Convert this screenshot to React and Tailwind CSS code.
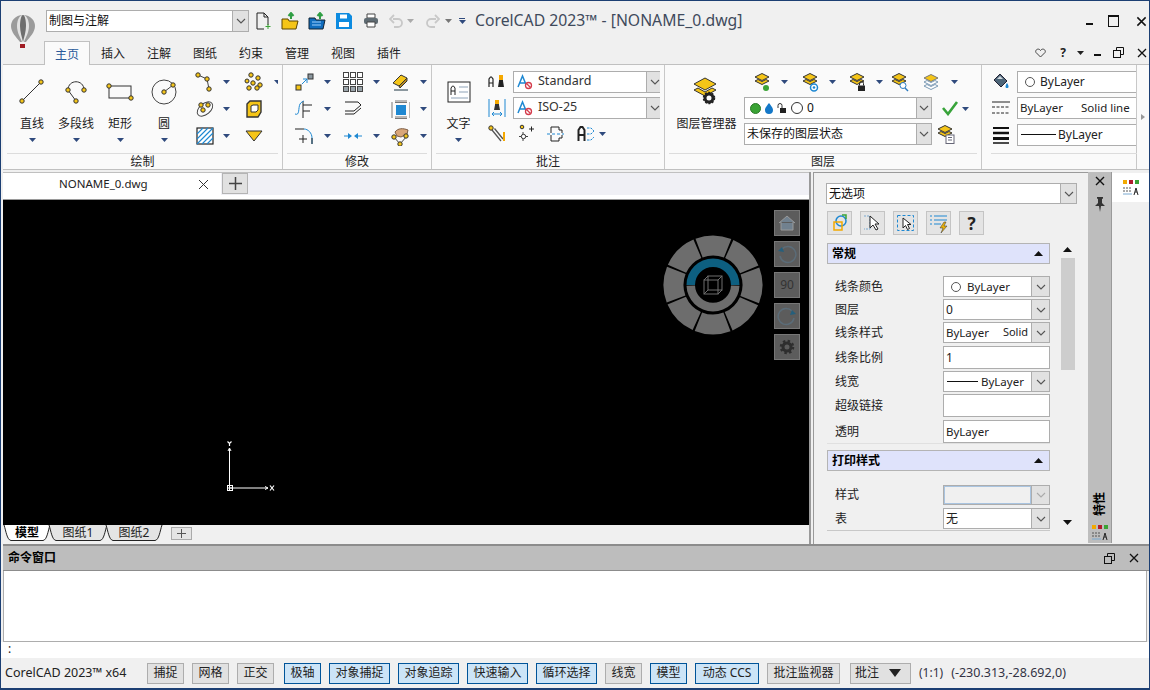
import React from 'react';

// small shared bits
const N = ({x, y, r = 2.2}) => <circle cx={x} cy={y} r={r} fill="#f5c518" stroke="#333" strokeWidth="1" />
const Ic = ({s = 20, children, vb}) => (
  <svg width={s} height={s} viewBox={vb || `0 0 ${s} ${s}`} fill="none" className="shrink-0">{children}</svg>
)
const Arrow = ({c = '#2f4a7d'}) => (
  <svg width="7" height="4" viewBox="0 0 7 4" className="shrink-0"><path d="M0 0h7L3.5 4z" fill={c} /></svg>
)
const Chev = ({c = '#555'}) => (
  <svg width="10" height="6" viewBox="0 0 10 6" fill="none"><path d="M1 1l4 4 4-4" stroke={c} strokeWidth="1.1" /></svg>
)
const StyleA = () => (
  <svg width="18" height="16" viewBox="0 0 18 16" fill="none" className="shrink-0 ml-[3px] mr-[3px]">
    <path d="M1 13L5.500 2 10 13M2.800 9h5.400" stroke="#1e88d2" strokeWidth="1.500" />
    <circle cx="11.500" cy="11.500" r="3" fill="#fff" stroke="#d43c4c" strokeWidth="1.300" />
    <path d="M9.500 9.500l4 4" stroke="#d43c4c" strokeWidth="1.200" />
  </svg>
)
const Combo = ({className, children, arrow = 18, off}) => (
  <div className={`flex border border-[#adadad] shrink-0 ${off ? 'bg-[#f0f0f0]' : 'bg-white'} ${className}`}>
    <div className="flex-1 min-w-0 flex items-center overflow-hidden whitespace-nowrap">{children}</div>
    {arrow > 0 && (
      <div style={{width: arrow}} className="flex items-center justify-center bg-[#e1e1e1] border-l border-[#adadad] shrink-0">
        <Chev c={off ? '#aaa' : '#555'} />
      </div>
    )}
  </div>
)

// ribbon tools
const BigTool = ({label, w = 44, icon, arrow = true}) => (
  <div style={{width: w}} className="flex flex-col items-center pt-[10px] shrink-0">
    <div className="h-8 flex items-center justify-center">{icon}</div>
    <div className="h-[18px] mt-[7px] leading-[18px] whitespace-nowrap">{label}</div>
    {arrow && <div className="mt-[5px] leading-none flex"><Arrow /></div>}
  </div>
)
const Tool = ({icon, arrow = true, gap = 8}) => (
  <div className="h-[27px] flex items-center shrink-0">
    <div className="w-5 h-5 flex items-center justify-center">{icon}</div>
    {arrow && <div style={{marginLeft: gap}} className="flex"><Arrow /></div>}
  </div>
)
const Group = ({label, w, children}) => (
  <div style={{width: w}} className="flex flex-col shrink-0 h-full border-r border-[#c8c8c8] px-[4px]">
    <div className="h-[88px] pt-[1px] flex overflow-hidden">{children}</div>
    <div className="border-t border-[#dcdcdc] h-[16px] leading-[16px] text-center">{label}</div>
  </div>
)

// icons, drawn after the screenshot
const bigIcons = {
  line: <Ic s={32}><path d="M6 25L25 6" stroke="#333" /><N x={6} y={25} /><N x={25} y={6} /></Ic>,
  poly: <Ic s={32}><path d="M8 14C8 3 24 3 24 14M8 14l8 11" stroke="#333" /><N x={8} y={14} /><N x={24} y={14} /><N x={16} y={25} /></Ic>,
  rect: <Ic s={32}><rect x="5" y="10" width="22" height="12" stroke="#333" /><N x={5} y={10} /><N x={27} y={22} /></Ic>,
  circle: <Ic s={32}><circle cx="16" cy="16" r="12" stroke="#444" /><path d="M16 16l9-7" stroke="#444" /><N x={16} y={16} /><N x={25} y={9} /></Ic>,
  text: (
    <svg width="24" height="22" viewBox="0 0 24 22" fill="none">
      <rect x="1" y="1" width="22" height="20" fill="#fff" stroke="#222" />
      <path d="M4 14V7l1.500-2h1L8 7v7M4 10h4" stroke="#222" />
      <path d="M12 6h9M12 11h9M4 17h17" stroke="#8fa3b8" />
    </svg>
  ),
  layers: (
    <svg width="32" height="34" viewBox="0 0 32 34">
      <path d="M3 9l11-6 11 6-11 6z" fill="#f5c518" stroke="#333" />
      <path d="M3 15l4-2 7 4 7-4 4 2-11 6z" fill="#f5c518" stroke="#333" />
      <g transform="translate(11 16)"><circle cx="7" cy="7" r="4" fill="none" stroke="#222" strokeWidth="3" /><circle cx="7" cy="7" r="5.500" fill="none" stroke="#222" strokeWidth="1.500" strokeDasharray="2 1.500" /></g>
    </svg>
  ),
}
const LayerStack = ({children}) => (
  <Ic s={20}>
    <path d="M2 5l7-3.500L16 5 9 8.500z" fill="#f5c518" stroke="#333" />
    <path d="M2 9l3-1.500 4 2 4-2L16 9l-7 3.500z" fill="#f5c518" stroke="#333" />
    {children}
  </Ic>
)
const draw = {
  poly2: <Ic><path d="M3 3l9 4 2 10" stroke="#444" /><N x={3} y={3} /><N x={12} y={7} /><N x={14} y={17} /></Ic>,
  dots: <Ic><N x={7} y={3} /><N x={14} y={6} /><N x={3} y={9} r={2} /><N x={9} y={11} /><N x={16} y={13} /><N x={5} y={16} /><N x={13} y={16} /></Ic>,
  ellipse: <Ic><ellipse cx="10" cy="10" rx="9" ry="5.500" transform="rotate(-40 10 10)" stroke="#444" /><N x={8} y={11} /><N x={13} y={6} /><N x={6} y={6} /></Ic>,
  region: <Ic><path d="M3 5l3-3h11v11l-3 5H3z" fill="#f5c518" stroke="#333" strokeWidth="1.400" /><path d="M7 7l2-1h5v5l-2 2H7z" fill="#fff" stroke="#333" /></Ic>,
  hatch: <Ic><rect x="2" y="2" width="16" height="16" fill="#fff" stroke="#222" strokeWidth="1.200" /><path d="M2 8l6-6M2 13l11-11M2 18L18 2M7 18L18 7M12 18l6-6" stroke="#1e88d2" strokeWidth="1.100" /></Ic>,
  wipe: <Ic><path d="M2 5h16l-8 10z" fill="#f5c518" stroke="#333" /></Ic>,
  move: <Ic><rect x="2" y="13" width="5" height="5" fill="#f5c518" stroke="#333" /><rect x="14" y="2" width="5" height="5" fill="#8b979e" stroke="#333" /><path d="M8 12l5-5M13 7H9M13 7v4" stroke="#1e88d2" /></Ic>,
  array: <Ic>{[3, 10, 17].map(y => [3, 10, 17].map(x => <rect key={x + '-' + y} x={x - 2.500} y={y - 2.500} width="5" height="5" fill={y === 17 ? '#9aa4aa' : '#fff'} stroke="#444" />))}</Ic>,
  erase: <Ic><path d="M3 11l8-8 6 3-8 8z" fill="#f5c518" stroke="#333" /><path d="M9 14l8-8v3l-7 7z" fill="#b98a1e" stroke="#333" /><path d="M4 18h14" stroke="#8b979e" strokeWidth="2" /></Ic>,
  trim: <Ic><path d="M9 2v17M9 6h9M9 12h7" stroke="#222" /><path d="M1 15c5 2 3-6 5-10 1-2 4-3 4-3" stroke="#1e88d2" /></Ic>,
  chamfer: <Ic><path d="M2 3h13l3 3-7 6H2M2 15h9l7-6" stroke="#222" /></Ic>,
  offset: <Ic><rect x="6" y="6" width="10" height="10" fill="#1e88d2" /><path d="M2 3v16M20 3v16M5 2h12M5 3.500h12M5 18h12M5 19.500h12" stroke="#777" /></Ic>,
  fillet: <Ic><path d="M10 3c4 0 8 4 8 9v6" stroke="#1e88d2" /><path d="M1 3h9M18 12v6" stroke="#222" /><path d="M5 13h8M9 9v8" stroke="#222" /></Ic>,
  join: <Ic><path d="M1 10h6M19 10h-6" stroke="#1e88d2" /><path d="M9 10L5 7v6zM11 10l4-3v6z" fill="#1e88d2" /></Ic>,
  grip: <Ic><path d="M5 6c3-4 8-4 13-2l-1 4-6 3-4-1z" fill="#d9a679" stroke="#7a5a40" /><path d="M4 11l6 7M10 18l7-8" stroke="#444" /><N x={4} y={11} /><N x={10} y={18} /><N x={16} y={10} /></Ic>,
  textStyle: <Ic><path d="M2 15V7l1.500-2h1L6 7v8M2 11h4" stroke="#222" strokeWidth="1.200" /><path d="M12 3h4v6l1 6h-6l1-6z" fill="#222" /><path d="M12 3h4v5h-4z" fill="#f5a800" /></Ic>,
  dimStyle: <Ic><path d="M2 1v18M18 1v18" stroke="#1e88d2" /><path d="M5 16h10M5 16l2-2M5 16l2 2M15 16l-2-2M15 16l-2 2" stroke="#1e88d2" /><path d="M8 2h4v5l1 5H7l1-5z" fill="#333" /><path d="M8 2h4v4H8z" fill="#f5a800" /></Ic>,
  leader: <Ic><path d="M5 6l9 11M7.500 4.500L16 15" stroke="#555" strokeWidth="1.300" /><path d="M17 8v9" stroke="#f5a800" strokeWidth="2" /><N x={4} y={4} /></Ic>,
  center: <Ic><path d="M8 8v9M4 12.500h9" stroke="#444" /><path d="M14 5h5M16.500 2.500v5" stroke="#222" /><N x={7} y={3} r={1.800} /><circle cx="8.500" cy="12.500" r="2.200" fill="#fff" stroke="#333" /></Ic>,
  wipeBox: <Ic><path d="M6 9V3h8v3h3v3M6 11v6h8v-3h3v-3" stroke="#222" /><path d="M2 10h17" stroke="#1e88d2" strokeDasharray="3 2" /></Ic>,
  replace: <Ic><path d="M2.500 17V6l2-3h2l2 3v11M2.500 11h6" stroke="#222" strokeWidth="2" /><path d="M11 4h4l3 3-3 3h-4M11 16h4l3-3" stroke="#1e88d2" strokeDasharray="2.500 1" /></Ic>,
  l1: <LayerStack><circle cx="13" cy="16" r="3" fill="#3aa335" /></LayerStack>,
  l2: <LayerStack><circle cx="13" cy="15.500" r="3.500" fill="#fff" stroke="#1e88d2" strokeWidth="1.500" /><circle cx="13" cy="15.500" r="1.300" fill="#1e88d2" /></LayerStack>,
  l3: <LayerStack><rect x="10" y="13.500" width="7" height="5.500" fill="#222" /><path d="M11.500 13.500v-2a2 2 0 014 0v2" stroke="#222" /></LayerStack>,
  l4: <LayerStack><circle cx="13" cy="13.500" r="3" fill="#fff" stroke="#2a7ac0" /><path d="M15 16l3 3" stroke="#2a7ac0" strokeWidth="1.400" /></LayerStack>,
  l5: <Ic><path d="M3 6l7-3.500L17 6l-7 3.500z" fill="#f5c518" stroke="#777" /><path d="M3 10l3-1.500 4 2 4-2 3 1.500-7 3.500z" fill="#fff" stroke="#7b9ab5" /><path d="M3 14l3-1.500 4 2 4-2 3 1.500-7 3.500z" fill="#fff" stroke="#7b9ab5" /></Ic>,
  lState: <LayerStack><rect x="10" y="11" width="8" height="8.500" fill="#fff" stroke="#667" /><path d="M12 13.500h4M12 16h4" stroke="#667" /></LayerStack>,
  check: <svg width="18" height="16" viewBox="0 0 18 16" fill="none"><path d="M2 8l5 6L16 2" stroke="#38a33a" strokeWidth="2.600" /></svg>,
  bucket: <Ic><path d="M3 8l6-6 7 7-6 6z" fill="#4d6578" stroke="#223" /><path d="M6 7l3-3 3 3" fill="#cfd8dd" /><path d="M16 11c2 3 2 5 0 5s-2-2 0-5z" fill="#1e88d2" /></Ic>,
  ltype: <Ic><path d="M1 4h18" stroke="#222" /><path d="M1 9h18M1 15h18" stroke="#222" strokeDasharray="3 1.500" /></Ic>,
  lweight: <Ic><path d="M2 3h16" stroke="#111" strokeWidth="2" /><path d="M2 8h16" stroke="#111" strokeWidth="2.500" /><path d="M2 13.500h16" stroke="#111" strokeWidth="3" /><path d="M2 18h16" stroke="#111" strokeWidth="1.500" /></Ic>,
}

const qat = [
  <svg key="n" width="18" height="18" viewBox="0 0 18 18" fill="none"><path d="M3 1h7l4 4v8M3 1v16h7M10 1v4h4" stroke="#222" /><path d="M14 12v5M11.500 14.500h5" stroke="#3aa335" /></svg>,
  <svg key="o" width="18" height="18" viewBox="0 0 18 18"><path d="M1 7h6l1 2h9l-2 8H1z" fill="#f5c518" stroke="#5a4500" /><path d="M10 7V2M7.500 4L10 1l2.500 3" fill="none" stroke="#2f9e44" strokeWidth="2" /></svg>,
  <svg key="o2" width="18" height="18" viewBox="0 0 18 18"><path d="M1 6h6l1 2h9l-2 9H1z" fill="#0f6cbd" stroke="#123" /><path d="M4 10h9M4 13h9" stroke="#9fd0ff" /><path d="M12 7V2M9.500 4L12 1l2.500 3" fill="none" stroke="#2f9e44" strokeWidth="2" /></svg>,
  <svg key="s" width="16" height="16" viewBox="0 0 16 16"><path d="M0 0h13l3 3v13H0z" fill="#0d8be0" /><rect x="4" y="1.500" width="7" height="4" fill="#fff" /><rect x="3" y="9" width="10" height="5" fill="#fff" /></svg>,
  <svg key="p" width="16" height="16" viewBox="0 0 16 16"><path d="M4 1h8v4H4z" fill="#fff" stroke="#444" /><rect x="1" y="5" width="14" height="6" rx="2" fill="#5f6b72" /><path d="M4 9h8v5H4z" fill="#fff" stroke="#444" /></svg>,
]

const Tab = ({label, active}) => active ? (
  <div className="w-[46px] h-[24px] bg-[#fafafa] border border-[#c0c0c0] border-b-0 text-center text-[#2a5a9a] leading-[25px] -mb-px z-10 shrink-0">{label}</div>
) : (
  <div className="w-[46px] h-[23px] text-center leading-[26px] shrink-0">{label}</div>
)

const SheetTab = ({label, active, w}) => (
  <div style={{width: w}} className="relative h-[17px] -mr-[3px] shrink-0 flex justify-center">
    <svg className="absolute inset-0" width={w} height="17" viewBox={`0 0 ${w} 17`} preserveAspectRatio="none">
      <path d={`M1 0c2 6 3 15 7 15.500h${w - 16}c4 -.5 5 -9.500 7 -15.500`} fill={active ? '#fff' : '#e4e4e4'} stroke="#222" />
    </svg>
    <span className={`relative leading-[16px] ${active ? 'font-bold text-black' : ''}`}>{label}</span>
  </div>
)

const Prop = ({label, h, mb = 2, children}) => (
  <div style={{height: h, marginBottom: mb}} className="flex items-center shrink-0">
    <div className="w-[116px] pl-[8px]">{label}</div>
    {children}
  </div>
)
const SectionHead = ({label}) => (
  <div className="h-[21px] bg-[#dfe3fb] border border-[#b4b4b4] flex items-center justify-between pl-[4px] pr-[6px] font-bold text-black shrink-0">
    {label}
    <svg width="9" height="5" viewBox="0 0 9 5"><path d="M4.500 0L9 5H0z" fill="#111" /></svg>
  </div>
)
const PanelBtn = ({children}) => (
  <div className="w-[25px] h-[24px] bg-[#e4e4e4] border border-[#c4c4c4] flex items-center justify-center shrink-0">{children}</div>
)
const CubeBtn = ({children}) => (
  <div className="w-[26px] h-[26px] bg-[#5c5c5c] border border-[#777] flex items-center justify-center text-[#222] text-[12px]">{children}</div>
)

const seg = (r1, r2, a1, a2) => {
  const p = (r, a) => `${(50 + r * Math.sin(a * Math.PI / 180)).toFixed(2)} ${(50 - r * Math.cos(a * Math.PI / 180)).toFixed(2)}`
  return `M${p(r1, a1)}A${r1} ${r1} 0 0 1 ${p(r1, a2)}L${p(r2, a2)}A${r2} ${r2} 0 0 0 ${p(r2, a1)}Z`
}
const ViewCube = () => (
  <svg width="100" height="100" viewBox="0 0 100 100">
    {[-22, 23, 68, 113, 158, 203, 248, 293].map(a => <path key={a} d={seg(49.500, 29.500, a + 1.300, a + 43.700)} fill="#6d6d6d" />)}
    <path d={seg(26.500, 18, -90, 90)} fill="#0d5f80" />
    <path d={seg(26.500, 18, 91.500, 268.500)} fill="#6d6d6d" />
    <g stroke="#6f6f6f" fill="none">
      <rect x="41" y="45" width="14" height="14" />
      <rect x="45" y="41" width="14" height="14" />
      <path d="M41 45l4-4M55 45l4-4M55 59l4-4M41 59l4-4" />
    </g>
  </svg>
)
const StatusBtn = ({w, on, ml = 0, children}) => (
  <div style={{width: w, marginLeft: ml}} className={`h-[21px] shrink-0 flex items-center justify-center border whitespace-nowrap ${on ? 'bg-[#cce4f7] border-[#005499]' : 'bg-[#e1e1e1] border-[#adadad]'}`}>{children}</div>
)

export default function App() {
  return (
    <div className="w-[1150px] h-[690px] overflow-hidden flex flex-col bg-[#f0f0f0] border-t border-b-2 border-x border-t-[#1c3f73] border-b-[#1c3f73] border-x-[#1c3f73] text-[12px] text-[#222] font-['Noto_Sans','Noto_Sans_CJK_SC',sans-serif]">
      {/* title + tabs */}
      <div className="flex h-[63px] shrink-0">
        <div className="w-[43px] flex justify-center pt-[13px] pl-[1px] shrink-0">
          <svg width="26" height="35" viewBox="0 0 26 35">
            <path d="M13 1C5 1 1 7 1 12c0 6 5 11 9 16h6c4-5 9-10 9-16 0-5-4-11-12-11z" fill="#9b9b9b" />
            <path d="M13 1C9 1 7 7 7 12c0 6 3 11 5 16h2c2-5 5-10 5-16 0-5-2-11-6-11z" fill="#e2e2e2" />
            <path d="M13 1c-2 0-3 6-3 11 0 6 2 11 3 16 1-5 3-10 3-16 0-5-1-11-3-11z" fill="#6e6e6e" />
            <rect x="10" y="30" width="5" height="4" fill="#a01c24" />
          </svg>
        </div>
        <div className="flex-1 min-w-0 flex flex-col">
          <div className="h-[40px] flex items-center shrink-0 relative">
            <Combo className="w-[203px] h-[22px] ml-[2px] border-[#a5a5a5]" arrow={16}>
              <span className="pl-[2px] text-[#111]">制图与注解</span>
            </Combo>
            <div className="flex items-center">
              {qat.map((q, i) => <div key={i} className="w-[27px] flex justify-center">{q}</div>)}
              <div className="w-[23px] flex justify-center text-[#ccc]">
                <svg width="14" height="14" viewBox="0 0 14 14" fill="none"><path d="M4 5h5a4 4 0 010 8H5M5 1L1 5l4 4" stroke="#c8c8c8" strokeWidth="1.800" /></svg>
              </div>
              <div className="w-[14px] flex"><Arrow c="#aaa" /></div>
              <div className="w-[24px] flex justify-center">
                <svg width="14" height="14" viewBox="0 0 14 14" fill="none"><path d="M10 5H5a4 4 0 000 8h4M9 1l4 4-4 4" stroke="#c8c8c8" strokeWidth="1.800" /></svg>
              </div>
              <div className="w-[14px] flex"><Arrow c="#777" /></div>
              <div className="w-[16px] flex flex-col gap-[1px]"><div className="w-[6px] h-px bg-[#2f4a7d]" /><Arrow /></div>
            </div>
            <div className="text-[15.75px] text-[#3f4a5c] whitespace-nowrap">CorelCAD 2023™ - [NONAME_0.dwg]</div>
            <div className="ml-auto flex items-center pr-[2px] gap-[14px]">
              <div className="w-[10px] flex justify-center"><div className="w-[7px] h-[2px] bg-[#111] mt-[5px]" /></div>
              <div className="w-[11px] h-[12px] border border-[#111] border-t-2" />
              <svg className="ml-[3px]" width="11" height="11" viewBox="0 0 12 12"><path d="M1.500 1.500l9 9M10.500 1.500l-9 9" stroke="#111" strokeWidth="1.600" /></svg>
            </div>
          </div>
          <div className="h-[23px] flex items-end shrink-0">
            <Tab label="主页" active />
            {['插入', '注解', '图纸', '约束', '管理', '视图', '插件'].map(t => <Tab key={t} label={t} />)}
            <div className="ml-auto h-[23px] flex items-center pr-[2px] text-[#222]">
              <svg width="11" height="10" viewBox="0 0 11 10" fill="none"><path d="M5.500 9L1 4.500C-.5 2 3.500-.5 5.500 2.500 7.500-.5 11.500 2 10 4.500z" stroke="#444" /></svg>
              <span className="ml-[14px] font-bold leading-none">?</span>
              <div className="ml-[11px] flex"><Arrow c="#222" /></div>
              <div className="ml-[10px] w-[7px] h-[2px] bg-[#111] mt-[5px]" />
              <svg className="ml-[12px]" width="11" height="11" viewBox="0 0 11 11" fill="none"><rect x=".5" y="3.500" width="7" height="7" stroke="#111" /><path d="M3.500 3V.5h7v7H8" stroke="#111" /></svg>
              <svg className="ml-[13px]" width="10" height="10" viewBox="0 0 10 10"><path d="M1 1l8 8M9 1L1 9" stroke="#111" strokeWidth="1.300" /></svg>
            </div>
          </div>
        </div>
      </div>

      {/* ribbon */}
      <div className="h-[106px] ml-[2px] flex shrink-0 bg-[#fafafa] border-t border-b border-[#c0c0c0]">
        <Group label="绘制" w={280}>
          <div className="flex">
            <div className="w-[3px] shrink-0" />
            <BigTool label="直线" icon={bigIcons.line} />
            <BigTool label="多段线" icon={bigIcons.poly} />
            <BigTool label="矩形" icon={bigIcons.rect} />
            <BigTool label="圆" icon={bigIcons.circle} />
          </div>
          <div className="grid grid-cols-[49px_46px] auto-rows-[27px] ml-[9px] pt-[2px] h-fit">
            <Tool icon={draw.poly2} /><Tool icon={draw.dots} gap={10} />
            <Tool icon={draw.ellipse} /><Tool icon={draw.region} arrow={false} />
            <Tool icon={draw.hatch} /><Tool icon={draw.wipe} arrow={false} />
          </div>
        </Group>
        <Group label="修改" w={149}>
          <div className="grid grid-cols-[49px_47px_46px] auto-rows-[27px] ml-[7px] pt-[2px] h-fit">
            <Tool icon={draw.move} gap={10} /><Tool icon={draw.array} gap={10} /><Tool icon={draw.erase} gap={10} />
            <Tool icon={draw.trim} gap={10} /><Tool icon={draw.chamfer} arrow={false} /><Tool icon={draw.offset} gap={10} />
            <Tool icon={draw.fillet} gap={10} /><Tool icon={draw.join} gap={10} /><Tool icon={draw.grip} gap={10} />
          </div>
        </Group>
        <Group label="批注" w={233}>
          <BigTool label="文字" w={45} icon={bigIcons.text} />
          <div className="flex flex-col pt-[2px] ml-[6px]">
            <div className="h-[27px] flex items-center">
              <div className="w-5 flex justify-center">{draw.textStyle}</div>
              <Combo className="w-[150px] h-[22px] ml-[6px]" arrow={16}>
                <StyleA /><span className="text-[#333] text-[12.5px]">Standard</span>
              </Combo>
            </div>
            <div className="h-[25px] flex items-center">
              <div className="w-5 flex justify-center">{draw.dimStyle}</div>
              <Combo className="w-[150px] h-[22px] ml-[6px]" arrow={16}>
                <StyleA /><span className="text-[#333] text-[12.5px]">ISO-25</span>
              </Combo>
            </div>
            <div className="h-[28px] flex items-center">
              <div className="w-[28px]">{draw.leader}</div>
              <div className="w-[30px]">{draw.center}</div>
              <div className="w-[31px]">{draw.wipeBox}</div>
              {draw.replace}
              <div className="ml-[3px] flex"><Arrow /></div>
            </div>
          </div>
        </Group>
        <Group label="图层" w={317}>
          <BigTool label="图层管理器" w={75} icon={bigIcons.layers} arrow={false} />
          <div className="flex flex-col pt-[2px]">
            <div className="h-[27px] flex items-center pl-[9px]">
              <div className="w-[48px]"><Tool icon={draw.l1} /></div>
              <div className="w-[47px]"><Tool icon={draw.l2} /></div>
              <div className="w-[42px]"><Tool icon={draw.l3} /></div>
              <div className="w-[31px]">{draw.l4}</div>
              {draw.l5}<div className="ml-[10px] flex"><Arrow /></div>
            </div>
            <div className="h-[26px] flex items-center">
              <Combo className="w-[188px] h-[22px]" arrow={15}>
                <div className="flex items-center pl-[5px] gap-[4px]">
                  <span className="w-[11px] h-[11px] rounded-full bg-[#3aa335] border border-[#2b7a28]" />
                  <svg width="8" height="11" viewBox="0 0 8 11"><path d="M4 0c3 4 4 5 4 7a4 4 0 01-8 0c0-2 1-3 4-7z" fill="#1478c8" /></svg>
                  <svg width="10" height="11" viewBox="0 0 10 11" fill="none"><rect x="3" y="5" width="6" height="5" fill="#222" /><path d="M1 5V2.500a2 2 0 014 0V5" stroke="#333" /></svg>
                  <span className="w-[12px] h-[12px] rounded-full border border-[#333] bg-white" />
                  <span className="text-[#111]">0</span>
                </div>
              </Combo>
              <div className="ml-[9px]">{draw.check}</div>
              <div className="ml-[3px] mt-[1px] flex"><Arrow /></div>
            </div>
            <div className="h-[25px] flex items-center">
              <Combo className="w-[188px] h-[22px]" arrow={15}><span className="pl-[2px] text-[#111]">未保存的图层状态</span></Combo>
              <div className="ml-[4px]">{draw.lState}</div>
            </div>
          </div>
        </Group>
        <div className="w-[155px] shrink-0 flex flex-col h-full pl-[9px] border-r border-[#c8c8c8]">
          <div className="h-[88px] pt-[3px] flex flex-col">
            <div className="h-[27px] flex items-center"><div className="w-5">{draw.bucket}</div>
              <div className="h-[22px] w-[122px] ml-[6px] bg-white border border-[#adadad] border-r-0 flex items-center pl-[7px]"><span className="w-[10px] h-[10px] rounded-full border border-[#555] mr-[5px]" />ByLayer</div></div>
            <div className="h-[26px] flex items-center"><div className="w-5">{draw.ltype}</div>
              <div className="h-[22px] w-[122px] ml-[6px] bg-white border border-[#adadad] border-r-0 flex items-center pl-[2px] overflow-hidden whitespace-nowrap text-[11.5px]">ByLayer<span className="ml-[18px]">Solid line</span></div></div>
            <div className="h-[27px] flex items-center"><div className="w-5">{draw.lweight}</div>
              <div className="h-[22px] w-[122px] ml-[6px] bg-white border border-[#adadad] border-r-0 flex items-center pl-[3px]"><span className="w-[35px] h-px bg-[#111] mr-[2px]" />ByLayer</div></div>
          </div>
          <div className="border-t border-[#dcdcdc] mr-[-1px]" />
        </div>
        <div className="flex-1 flex items-center justify-center"><svg width="4" height="6" viewBox="0 0 4 6"><path d="M0 0l4 3-4 3z" fill="#999" /></svg></div>
      </div>

      {/* document + properties */}
      <div className="flex h-[374px] shrink-0 pt-[2px]">
        <div className="w-[808px] ml-[2px] flex flex-col shrink-0 border-r-2 border-[#9a9a9a]">
          <div className="h-[23px] flex bg-[#f0f0f5] border-t border-[#c0c0c0] shrink-0">
            <div className="w-[218px] bg-white flex items-center shrink-0 relative pl-[56px] text-[11.5px] text-[#222]">
              NONAME_0.dwg
              <svg className="ml-auto mr-[12px]" width="11" height="11" viewBox="0 0 11 11"><path d="M1 1l9 9M10 1l-9 9" stroke="#333" /></svg>
            </div>
            <div className="w-[26px] h-[21px] bg-[#e1e1e1] border border-[#b4b4b4] flex items-center justify-center shrink-0 ml-[1px]">
              <svg width="13" height="13" viewBox="0 0 13 13"><path d="M6.500 0v13M0 6.500h13" stroke="#444" strokeWidth="1.500" /></svg>
            </div>
          </div>
          <div className="h-[5px] bg-white border-b border-[#9a9a9a] shrink-0" />
          <div className="h-[325px] bg-black relative shrink-0">
            {/* view cube and ucs sit over the drawing */}
            <div className="absolute left-[660px] top-[35px]"><ViewCube /></div>
            <div className="absolute left-[771px] top-[10px] flex flex-col gap-[5px]">
              <CubeBtn><svg width="18" height="16" viewBox="0 0 18 16" fill="none"><path d="M1 8l8-7 8 7M3 7v8h12V7" fill="#71818f" stroke="#999" /></svg></CubeBtn>
              <CubeBtn><svg width="20" height="20" viewBox="0 0 20 20" fill="none"><path d="M5 5a8 8 0 11-2 7" stroke="#5b6c78" strokeWidth="1.500" /><path d="M1 7l4-4 2 5z" fill="#255f7c" /></svg></CubeBtn>
              <CubeBtn><span className="text-[#333] text-[12px]">90</span></CubeBtn>
              <CubeBtn><svg width="20" height="20" viewBox="0 0 20 20" fill="none"><path d="M15 5a8 8 0 10 2 7" stroke="#5b6c78" strokeWidth="1.500" /><path d="M19 8l-4-4-2 5z" fill="#255f7c" /></svg></CubeBtn>
              <CubeBtn><svg width="16" height="16" viewBox="0 0 16 16" fill="none"><circle cx="8" cy="8" r="4" stroke="#2e2e2e" strokeWidth="3" /><circle cx="8" cy="8" r="6" stroke="#2e2e2e" strokeWidth="2.500" strokeDasharray="2.400 2.300" /></svg></CubeBtn>
            </div>
            <svg className="absolute left-[221px] top-[240px]" width="52" height="52" viewBox="0 0 52 52" fill="none">
              <path d="M5.500 48V9M5.500 48H44" stroke="#fff" />
              <rect x="3.500" y="45.500" width="5" height="5" stroke="#fff" />
              <path d="M5.500 46v4M3.500 48h5M4 11l1.500-3L7 11M41 46.500l3 1.500-3 1.500" stroke="#fff" />
              <path d="M3.500 1.500l2 2 2-2M5.500 3.500V6M46 45.500l4 5M50 45.500l-4 5" stroke="#fff" strokeWidth="1.200" />
            </svg>
          </div>
          <div className="h-[18px] flex items-start shrink-0 bg-[#f0f0f0]">
            <SheetTab label="模型" active w={48} />
            <SheetTab label="图纸1" w={60} />
            <SheetTab label="图纸2" w={58} />
            <div className="w-[21px] h-[13px] bg-[#e4e4e4] border border-[#aaa] ml-[11px] mt-[2px] flex items-center justify-center shrink-0">
              <svg width="9" height="9" viewBox="0 0 9 9"><path d="M4.500 0v9M0 4.500h9" stroke="#555" /></svg>
            </div>
          </div>
        </div>

        <div className="w-[275px] ml-[2px] border-l border-t border-[#9a9a9a] flex shrink-0 bg-[#f0f0f0]">
          <div className="w-[224px] ml-[12px] shrink-0 flex flex-col pt-[10px] overflow-visible">
            <Combo className="w-[251px] h-[21px] mb-[7px] z-10" arrow={16}><span className="pl-[2px] text-[#111]">无选项</span></Combo>
            <div className="pl-[1px] flex flex-col">
              <div className="flex gap-[8px] mb-[8px] shrink-0">
                <PanelBtn><svg width="20" height="20" viewBox="0 0 20 20" fill="none"><circle cx="11" cy="8" r="5" stroke="#1e88d2" strokeWidth="1.500" /><rect x="4" y="9" width="8" height="8" stroke="#f2a900" strokeWidth="1.500" /><path d="M12 2h4v4" stroke="#3aa335" strokeWidth="1.500" /></svg></PanelBtn>
                <PanelBtn><svg width="20" height="20" viewBox="0 0 20 20" fill="none"><path d="M1 3h6v13H1" stroke="#7aa9d0" strokeDasharray="2 1" /><path d="M7 3v12l3-3 3 5 2-1-3-5h4z" fill="#fff" stroke="#222" /></svg></PanelBtn>
                <PanelBtn><svg width="20" height="20" viewBox="0 0 20 20" fill="none"><rect x="1.500" y="2.500" width="16" height="15" stroke="#1e88d2" strokeDasharray="3 2" /><path d="M7 5v10l2.500-2.500 2 4 2-1-2-4H15z" fill="#fff" stroke="#222" /></svg></PanelBtn>
                <PanelBtn><svg width="20" height="20" viewBox="0 0 20 20"><path d="M1 3h2M5 3h13M1 7h2M5 7h13M1 11h2M5 11h7" stroke="#1e88d2" fill="none" /><path d="M15 9l-4 6h3l-2 5 6-7h-3l2-4z" fill="#e8b10c" stroke="#333" strokeWidth=".5" /></svg></PanelBtn>
                <PanelBtn><span className="font-bold text-[17px] text-[#222] leading-none">?</span></PanelBtn>
              </div>
              <SectionHead label="常规" />
              <div className="pt-[12px] flex flex-col shrink-0 border-b border-[#e0e0e0]">
                <Prop label="线条颜色" h={21}><Combo className="w-[107px] h-[21px]"><span className="w-[10px] h-[10px] rounded-full border border-[#555] ml-[7px] mr-[6px]" /><span className="text-[11.5px]">ByLayer</span></Combo></Prop>
                <Prop label="图层" h={21}><Combo className="w-[107px] h-[21px]"><span className="pl-[2px]">0</span></Combo></Prop>
                <Prop label="线条样式" h={21} mb={3}><Combo className="w-[107px] h-[21px]"><span className="pl-[2px] text-[11.5px]">ByLayer</span><span className="ml-[14px] text-[11px]">Solid</span></Combo></Prop>
                <Prop label="线条比例" h={23} mb={2}><Combo className="w-[107px] h-[23px]" arrow={0}><span className="pl-[2px]">1</span></Combo></Prop>
                <Prop label="线宽" h={21} mb={2}><Combo className="w-[107px] h-[21px]"><span className="w-[31px] h-px bg-[#111] ml-[3px] mr-[3px]" /><span className="text-[11.5px]">ByLayer</span></Combo></Prop>
                <Prop label="超级链接" h={23} mb={3}><Combo className="w-[107px] h-[23px]" arrow={0} /></Prop>
                <Prop label="透明" h={23} mb={0}><Combo className="w-[107px] h-[23px]" arrow={0}><span className="pl-[2px] text-[11.5px]">ByLayer</span></Combo></Prop>
              </div>
              <div className="h-[6px] shrink-0" />
              <SectionHead label="打印样式" />
              <div className="pt-[14px] flex flex-col shrink-0">
                <Prop label="样式" h={20} mb={3}><Combo className="w-[107px] h-[20px]" off><span className="w-full h-full border border-[#a9c4e0]" /></Combo></Prop>
                <Prop label="表" h={21} mb={0}><Combo className="w-[107px] h-[21px]"><span className="pl-[2px]">无</span></Combo></Prop>
              </div>
              <div className="border-b border-[#c8c8c8] mt-[1px]" />
            </div>
          </div>
          {/* scrollbar */}
          <div className="w-[26px] ml-[5px] pt-[74px] flex flex-col items-center shrink-0">
            <svg className="-ml-[2px]" width="9" height="5" viewBox="0 0 9 5"><path d="M4.500 0L9 5H0z" fill="#111" /></svg>
            <div className="w-[14px] h-[112px] bg-[#cdcdcd] mt-[6px]" />
            <div className="flex-1" />
            <svg className="mb-[19px] -ml-[2px]" width="9" height="5" viewBox="0 0 9 5"><path d="M0 0h9L4.500 5z" fill="#111" /></svg>
          </div>
          <div className="w-[9px] shrink-0" />
        </div>

        <div className="w-[24px] bg-[#bdbdbd] flex flex-col items-center pt-[4px] pb-[2px] shrink-0 border-r border-[#9a9a9a] mb-[1px]">
          <svg width="10" height="10" viewBox="0 0 10 10"><path d="M1 1l8 8M9 1L1 9" stroke="#111" strokeWidth="1.400" /></svg>
          <svg className="mt-[11px]" width="10" height="15" viewBox="0 0 10 15"><path d="M2 0h6v1.500L7 2v4l3 3H6l-1 6-1-6H0l3-3V2L2 1.500z" fill="#333" /></svg>
          <div className="flex-1" />
          <div className="[writing-mode:vertical-rl] [text-orientation:sideways] rotate-180 font-bold text-black leading-[14px] h-[24px]">特性</div>
          <svg className="mt-[9px]" width="16" height="16" viewBox="0 0 16 16"><rect x="0" y="0" width="4" height="4" fill="#f2a900" /><rect x="6" y="0" width="4" height="4" fill="#b01c2e" /><rect x="12" y="0" width="4" height="4" fill="#3aa335" /><path d="M0 8h9M0 11h9" stroke="#555" strokeDasharray="2 1" /><path d="M0 14h9" stroke="#7aa9d0" /><path d="M11 15l2-7 2 7M12 12h2" stroke="#222" fill="none" /></svg>
        </div>
        <div className="flex-1 pt-[1px]">
          <div className="h-[29px] bg-white flex items-center justify-center">
            <svg width="18" height="16" viewBox="0 0 16 16"><rect x="0" y="0" width="4" height="4" fill="#f2a900" /><rect x="6" y="0" width="4" height="4" fill="#b01c2e" /><rect x="12" y="0" width="4" height="4" fill="#3aa335" /><path d="M0 8h9M0 11h9" stroke="#555" strokeDasharray="2 1" /><path d="M0 14h9" stroke="#7aa9d0" /><path d="M11 15l2-7 2 7M12 12h2" stroke="#222" fill="none" /></svg>
          </div>
        </div>
      </div>

      {/* command window */}
      <div className="h-[27px] bg-[#bdbdbd] border-t-2 border-b border-[#8c8c8c] ml-[2px] flex items-center pl-[5px] pr-[10px] font-bold text-black shrink-0">
        命令窗口
        <svg className="ml-auto" width="11" height="11" viewBox="0 0 11 11" fill="none"><rect x=".5" y="3.500" width="7" height="7" stroke="#111" /><path d="M3.500 3V.5h7v7H8" stroke="#111" /></svg>
        <svg className="ml-[14px]" width="10" height="10" viewBox="0 0 10 10"><path d="M1 1l8 8M9 1L1 9" stroke="#111" strokeWidth="1.300" /></svg>
      </div>
      <div className="h-[71px] bg-white border-l border-r border-b border-[#adadad] ml-[2px] mr-[2px] shrink-0" />
      <div className="h-[16px] bg-white pl-[7px] leading-[14px] shrink-0">:</div>

      {/* status bar */}
      <div className="flex-1 flex items-center pl-[4px] text-[#222]">
        <div className="w-[142px] shrink-0 text-[12.5px] whitespace-nowrap">CorelCAD 2023™ x64</div>
        <div className="flex items-center gap-[8px]">
          <StatusBtn w={37}>捕捉</StatusBtn>
          <StatusBtn w={37}>网格</StatusBtn>
          <StatusBtn w={37}>正交</StatusBtn>
          <StatusBtn w={37} ml={2} on>极轴</StatusBtn>
          <StatusBtn w={61} on>对象捕捉</StatusBtn>
          <StatusBtn w={61} on>对象追踪</StatusBtn>
          <StatusBtn w={61} on>快速输入</StatusBtn>
          <StatusBtn w={61} on>循环选择</StatusBtn>
          <StatusBtn w={37}>线宽</StatusBtn>
          <StatusBtn w={37} on>模型</StatusBtn>
          <StatusBtn w={64} on>动态 CCS</StatusBtn>
          <StatusBtn w={73}>批注监视器</StatusBtn>
          <div className="w-[61px] h-[21px] ml-[2px] bg-[#e1e1e1] border border-[#adadad] flex items-center justify-between pl-[4px] pr-[9px] shrink-0">
            批注
            <svg width="12" height="8" viewBox="0 0 12 8"><path d="M0 0h12L6 8z" fill="#222" /></svg>
          </div>
        </div>
        <div className="ml-[8px] whitespace-nowrap text-[#334]">(1:1)</div>
        <div className="ml-[8px] whitespace-nowrap text-[12.5px] text-[#334]">(-230.313,-28.692,0)</div>
      </div>
    </div>
  )
}
